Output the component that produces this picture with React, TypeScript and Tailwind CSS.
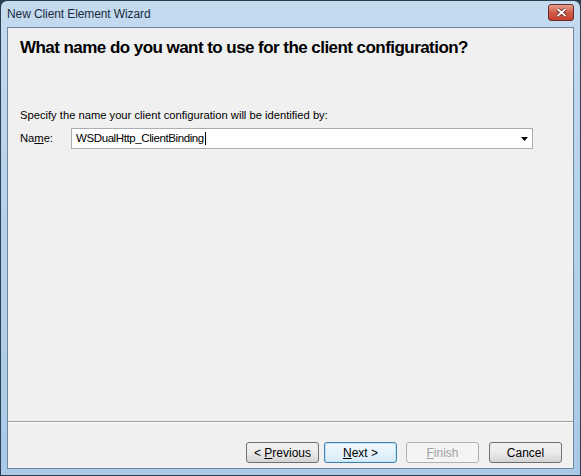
import React from "react";

const font = { fontFamily: '"Liberation Sans", Arial, sans-serif' };

function Btn({ children, disabled, focused, className = "" }: { children: React.ReactNode; disabled?: boolean; focused?: boolean; className?: string }) {
  return (
    <button
      className={
        "h-[21px] w-[73px] rounded-[3px] border text-[12px] flex items-center justify-center " +
        className +
        " " +
        (disabled
          ? "border-[#adb2b5] bg-[#f4f4f4] text-[#a0a0a0]"
          : focused
          ? "border-[#3c7fb1] bg-gradient-to-b from-[#f2f9fd] to-[#d5ebf8] text-black shadow-[inset_0_0_0_1px_#c5e5f6]"
          : "border-[#707070] bg-gradient-to-b from-[#f2f2f2] via-[#ebebeb] to-[#d3d3d3] text-black")
      }
    >
      {children}
    </button>
  );
}

export default function App() {
  return (
    <div style={font} className="w-[581px] h-[476px] bg-[#2c3d50] p-px">
      <div className="w-full h-full flex flex-col bg-gradient-to-b from-[#c4daef] via-[#b6d0ea] to-[#a9c9e6] rounded-t-[6px]">
        {/* Title bar */}
        <div className="h-[26px] flex items-center justify-between pl-[6px] pr-[6px]">
          <span className="text-[12px] text-[#1b2c3f] leading-none mt-[-1px] tracking-[-0.1px]">New Client Element Wizard</span>
          <div className="h-[17px] w-[26px] rounded-[3px] border border-[#6b2a22] bg-gradient-to-b from-[#e79f91] via-[#d05b48] to-[#c4402c] flex items-center justify-center mt-[-3px]">
            <svg width="11" height="9" viewBox="0 0 11 9">
              <path d="M1.5 1 L9.5 8 M9.5 1 L1.5 8" stroke="#4a1a12" strokeWidth="3.2" />
              <path d="M1.5 1 L9.5 8 M9.5 1 L1.5 8" stroke="#fff" strokeWidth="1.8" />
            </svg>
          </div>
        </div>

        {/* Client area */}
        <div className="flex-1 mx-[6px] mb-[6px] border border-[#6e8aa3] bg-[#f0f0f0] flex flex-col">
          <div className="px-[12px] pt-[10px]">
            <h1 className="text-[17px] font-bold text-black leading-[20px] tracking-[-0.55px]">
              What name do you want to use for the client configuration?
            </h1>
          </div>

          <div className="px-[12px] pt-[50px]">
            <p className="text-[11.2px] text-black leading-[14px]">
              Specify the name your client configuration will be identified by:
            </p>
            <div className="flex items-center mt-[6px]">
              <span className="text-[11.2px] w-[51px] text-black">
                Na<span className="underline">m</span>e:
              </span>
              <div className="w-[462px] h-[21px] border border-[#abadb3] bg-white flex items-center pl-[4px] pr-[4px]">
                <span className="text-[11.5px] text-black flex-1 tracking-[-0.4px]">
                  WSDualHttp_ClientBinding<span className="inline-block w-px h-[13px] bg-black align-middle ml-px" />
                </span>
                <svg width="7" height="4" viewBox="0 0 7 4">
                  <path d="M0 0 H7 L3.5 4 Z" fill="#000" />
                </svg>
              </div>
            </div>
          </div>

          <div className="flex-1" />

          <div className="border-t border-[#a0a0a0] border-b border-b-white" />

          <div className="flex justify-end items-center pr-[11px] pt-[19px] pb-[5px]">
            <Btn>
              &lt;&nbsp;<span className="underline">P</span>revious
            </Btn>
            <Btn focused className="ml-[5px]">
              <span className="underline">N</span>ext &gt;
            </Btn>
            <Btn disabled className="ml-[9px]">
              <span className="underline">F</span>inish
            </Btn>
            <Btn className="ml-[10px]">Cancel</Btn>
          </div>
        </div>
      </div>
    </div>
  );
}
